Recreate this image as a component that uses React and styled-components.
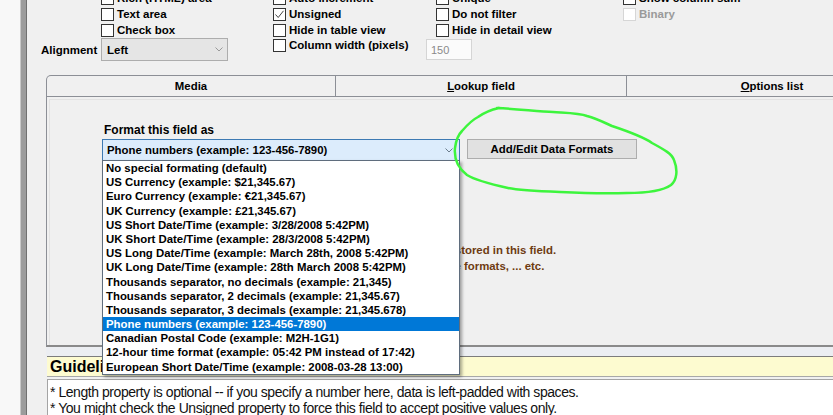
import React from 'react'
import styled, { createGlobalStyle } from 'styled-components'

const ui = '"Liberation Sans", Arial, sans-serif'

const GlobalStyle = createGlobalStyle`
    html, body {
        margin: 0;
        padding: 0;
        background: #f0f0f0;
        overflow: hidden;
    }
    body {
        font-family: ${ui};
        font-size: 11.5px;
        color: #000;
    }
`;

const Page = styled.div`
    position: relative;
    display: flex;
    width: 833px;
    height: 415px;
    overflow: hidden;
`;

const LeftStrip = styled.div`
    width: 20px;
    flex-shrink: 0;
    background: #f8f8f8;
`;

const SideBar = styled.div`
    width: 5px;
    flex-shrink: 0;
    background: #9c9c9c;
    border-left: 1px solid #c9c9c9;
    border-right: 1px solid #707070;
`;

const Main = styled.div`
    flex: 1;
    min-width: 0;
    padding-left: 14px;
`;

const OptionsGrid = styled.div`
    display: grid;
    grid-template-columns: 60px 172px 153px 197px 1fr;
    grid-template-rows: 16px 16px 16px 23px;
    margin-top: -10px;
`;

const Cell = styled.label`
    display: flex;
    align-items: ${p => (p.$top ? 'flex-start' : 'center')};
    gap: 3px;
    padding-left: ${p => p.$indent || 0}px;
    padding-top: ${p => (p.$top ? 1 : 0)}px;
    font-weight: bold;
    white-space: nowrap;
    color: ${p => (p.$disabled ? '#9a9a9a' : '#000')};
`;

const Box = styled.span`
    width: 13px;
    height: 13px;
    box-sizing: border-box;
    flex-shrink: 0;
    background: #fff;
    border: 1px solid ${p => (p.$disabled ? '#d6d6d6' : '#333')};
    display: flex;
    align-items: center;
    justify-content: center;
`;

const FieldLabel = styled.div`
    display: flex;
    align-items: center;
    font-weight: bold;
`;

const SmallSelect = styled.div`
    display: flex;
    align-items: center;
    justify-content: space-between;
    width: 127px;
    height: 23px;
    box-sizing: border-box;
    background: #e5e5e5;
    border: 1px solid #adadad;
    padding: 0 4px 0 5px;
    font-weight: bold;
`;

const NumInput = styled.div`
    display: flex;
    align-items: center;
    width: 46px;
    height: 21px;
    box-sizing: border-box;
    background: #fbfbfb;
    border: 1px solid #d5d5d5;
    padding-left: 4px;
    color: #8a8a8a;
    font-size: 11px;
`;

const Section = styled.div`
    margin-left: 5px;
    width: 900px;
`;

const TabStrip = styled.div`
    display: flex;
    margin-top: 14px;
`;

const Tab = styled.div`
    width: ${p => p.$w}px;
    height: 21px;
    box-sizing: border-box;
    flex-shrink: 0;
    border: 1px solid #8c8f96;
    border-bottom: none;
    border-left: ${p => (p.$first ? '1px solid #8c8f96' : 'none')};
    border-top-left-radius: ${p => (p.$first ? 5 : 0)}px;
    display: flex;
    align-items: center;
    justify-content: center;
    font-weight: bold;
    font-size: 11.4px;
`;

const Panel = styled.div`
    position: relative;
    height: 251px;
    box-sizing: border-box;
    border-top: 1px solid #8c8f96;
    border-left: 1px solid #8c8f96;
    border-bottom: 2px solid #8a8a8a;
    padding: 2px 0 0 2px;
`;

const PanelInner = styled.div`
    height: 100%;
    box-sizing: border-box;
    border-top: 1px solid #e2e2e2;
    border-left: 1px solid #e2e2e2;
    padding: 24px 0 0 52px;
`;

const FormatLabel = styled.div`
    font-weight: bold;
    font-size: 12px;
    line-height: 13px;
    padding-left: 2px;
`;

const FormatRow = styled.div`
    display: flex;
    align-items: flex-start;
    gap: 7px;
    margin-top: 2px;
`;

const SelectWrap = styled.div`
    position: relative;
    width: 358px;
`;

const FormatSelect = styled.div`
    display: flex;
    align-items: center;
    justify-content: space-between;
    height: 22px;
    box-sizing: border-box;
    background: #dcecfc;
    border: 1px solid #3d7ab3;
    padding: 0 6px 0 4px;
    font-weight: bold;
    font-size: 11.4px;
`;

const DropList = styled.div`
    position: absolute;
    top: 21px;
    left: 0;
    width: 358px;
    box-sizing: border-box;
    background: #fff;
    border: 1px solid #5f6d7d;
    box-shadow: 2px 2px 3px rgba(0, 0, 0, 0.35);
    z-index: 5;
`;

const Item = styled.div`
    height: 14.2px;
    line-height: 14.2px;
    padding-left: 3px;
    font-weight: bold;
    font-size: 11.4px;
    white-space: nowrap;
    background: ${p => (p.$selected ? '#0078d7' : 'transparent')};
    color: ${p => (p.$selected ? '#fff' : '#000')};
`;

const Button = styled.div`
    width: 170px;
    height: 20px;
    box-sizing: border-box;
    background: #e1e1e1;
    border: 1px solid #adadad;
    display: flex;
    align-items: center;
    justify-content: center;
    font-weight: bold;
    font-size: 11.4px;
`;

const Notes = styled.div`
    margin-top: 81px;
    color: #6e3b12;
    font-weight: bold;
    font-size: 11.4px;
    line-height: 16px;
    white-space: nowrap;
`;

const NoteLine = styled.div`
    margin-left: ${p => p.$shift}px;
`;

const Gap = styled.div`
    height: 9px;
    background: #eceef2;
`;

const GuideHeader = styled.div`
    height: 21px;
    box-sizing: border-box;
    background: #fdfbd0;
    border-top: 1px solid #7c7c7c;
    border-bottom: 1px solid #a8a8a8;
    margin-left: 1px;
    padding-left: 3px;
    display: flex;
    align-items: center;
    font-weight: bold;
    font-size: 16px;
`;

const GuideBox = styled.div`
    margin-top: 2px;
    margin-left: 1px;
    height: 60px;
    background: #fff;
    border: 1px solid #a4a4a4;
    padding: 4px 0 0 2px;
    font-size: 14px;
    letter-spacing: -0.45px;
    line-height: 16px;
    color: #111;
`;

const Annotation = styled.svg`
    position: absolute;
    left: 0;
    top: 0;
    pointer-events: none;
    z-index: 10;
`;

const Chevron = ({ color = '#666' }) => (
    <svg width="8" height="5" viewBox="0 0 8 5">
        <path d="M0.5 0.5 L4 4 L7.5 0.5" fill="none" stroke={color} strokeWidth="1" />
    </svg>
)

const Check = ({ checked, disabled }) => (
    <Box $disabled={disabled}>
        {checked && (
            <svg width="11" height="11" viewBox="0 0 11 11">
                <path d="M1.5 5.5 L4.2 8.5 L9.5 1.8" fill="none" stroke="#444" strokeWidth="1" />
            </svg>
        )}
    </Box>
)

const formats = [
    'No special formating (default)',
    'US Currency (example: $21,345.67)',
    'Euro Currency (example: €21,345.67)',
    'UK Currency (example: £21,345.67)',
    'US Short Date/Time (example: 3/28/2008 5:42PM)',
    'UK Short Date/Time (example: 28/3/2008 5:42PM)',
    'US Long Date/Time (example: March 28th, 2008 5:42PM)',
    'UK Long Date/Time (example: 28th March 2008 5:42PM)',
    'Thousands separator, no decimals (example: 21,345)',
    'Thousands separator, 2 decimals (example: 21,345.67)',
    'Thousands separator, 3 decimals (example: 21,345.678)',
    'Phone numbers (example: 123-456-7890)',
    'Canadian Postal Code (example: M2H-1G1)',
    '12-hour time format (example: 05:42 PM instead of 17:42)',
    'European Short Date/Time (example: 2008-03-28 13:00)',
]

const selected = 'Phone numbers (example: 123-456-7890)'

const App = () => {
    return (
        <>
            <GlobalStyle />
            <Page>
                <LeftStrip />
                <SideBar />
                <Main>
                    <OptionsGrid>
                        {/* row 0 (cut off at the top) */}
                        <div />
                        <Cell><Check />Rich (HTML) area</Cell>
                        <Cell><Check />Auto increment</Cell>
                        <Cell $indent={10}><Check />Unique</Cell>
                        <Cell><Check />Show column sum</Cell>

                        <div />
                        <Cell><Check />Text area</Cell>
                        <Cell><Check checked />Unsigned</Cell>
                        <Cell $indent={10}><Check />Do not filter</Cell>
                        <Cell $disabled><Check disabled />Binary</Cell>

                        <div />
                        <Cell><Check />Check box</Cell>
                        <Cell><Check />Hide in table view</Cell>
                        <Cell $indent={10}><Check />Hide in detail view</Cell>
                        <div />

                        <FieldLabel>Alignment</FieldLabel>
                        <div>
                            <SmallSelect>Left <Chevron color="#999" /></SmallSelect>
                        </div>
                        <Cell $top><Check />Column width (pixels)</Cell>
                        <div style={{ paddingTop: 1 }}>
                            <NumInput>150</NumInput>
                        </div>
                        <div />
                    </OptionsGrid>

                    <Section>
                        <TabStrip>
                            <Tab $first $w={290}>Media</Tab>
                            <Tab $w={291}><span><u>L</u>ookup field</span></Tab>
                            <Tab $w={291}><span><u>O</u>ptions list</span></Tab>
                        </TabStrip>
                        <Panel>
                            <PanelInner>
                                <FormatLabel>Format this field as</FormatLabel>
                                <FormatRow>
                                    <SelectWrap>
                                        <FormatSelect>
                                            {selected}
                                            <Chevron color="#6b7c8c" />
                                        </FormatSelect>
                                        <DropList>
                                            {formats.map(f => (
                                                <Item key={f} $selected={f === selected}>{f}</Item>
                                            ))}
                                        </DropList>
                                    </SelectWrap>
                                    <Button>Add/Edit Data Formats</Button>
                                </FormatRow>
                                <Notes>
                                    <NoteLine $shift={9}>Data formatting affects only how data is displayed, not how it's stored in this field.</NoteLine>
                                    <NoteLine $shift={36}>Add your own custom formats, like date, currency or phone formats, ... etc.</NoteLine>
                                </Notes>
                            </PanelInner>
                        </Panel>
                        <Gap />
                        <GuideHeader>Guidelines regarding the integer data type</GuideHeader>
                        <GuideBox>
                            <div>* Length property is optional -- if you specify a number here, data is left-padded with spaces.</div>
                            <div>* You might check the Unsigned property to force this field to accept positive values only.</div>
                        </GuideBox>
                    </Section>
                </Main>

                <Annotation width="833" height="415" viewBox="0 0 833 415">
                    <path
                        d="M497 108 C520 109 540 112 553 112 C570 113 580 113 587 116 C598 119 605 123 612 126 C630 132 645 138 652 143 C665 150 672 154 674 160 C678 170 677 180 671 185 C664 190 650 193 627 193 C600 194 580 193 560 192 C535 191 518 190 508 188 C490 184 475 180 467 175 C458 168 454 158 455 148 C456 140 458 135 462 131 C468 124 472 120 478 117 C485 112 490 110 499 108"
                        fill="none"
                        stroke="#3df53d"
                        strokeWidth="2.5"
                        strokeLinecap="round"
                    />
                </Annotation>
            </Page>
        </>
    )
}

export default App
